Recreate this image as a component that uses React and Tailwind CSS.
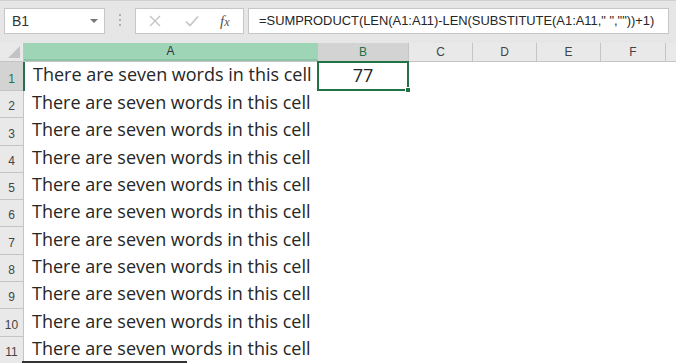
import React from 'react';

const rows = [1, 2, 3, 4, 5, 6, 7, 8, 9, 10, 11];
const cols = [
  { name: 'A', w: 'w-[294px]' },
  { name: 'B', w: 'w-[91px]' },
  { name: 'C', w: 'w-[64px]' },
  { name: 'D', w: 'w-[64px]' },
  { name: 'E', w: 'w-[64px]' },
  { name: 'F', w: 'w-[65px]' },
];

const App = () => {
  return (
    <div className="w-[676px] h-[363px] overflow-hidden bg-white relative font-['Open_Sans','DejaVu_Sans',sans-serif]">
      {/* Formula bar */}
      <div className="h-[43px] bg-[#e6e6e6] flex items-start pt-[7px] pl-[4px] border-t border-[#d0d0d0]">
        <div className="w-[101px] h-[26px] bg-white border border-[#c6c6c6] flex items-center justify-between pl-[7px] pr-[6px]">
          <span className="text-[14px] text-[#333] font-['Liberation_Sans',sans-serif]">B1</span>
          <span className="w-0 h-0 border-l-[4px] border-r-[4px] border-t-[4px] border-l-transparent border-r-transparent border-t-[#777]" />
        </div>
        <div className="ml-[14px] mt-[6px] flex flex-col gap-[3px]">
          <span className="w-[2px] h-[2px] bg-[#b0b0b0]" />
          <span className="w-[2px] h-[2px] bg-[#b0b0b0]" />
          <span className="w-[2px] h-[2px] bg-[#b0b0b0]" />
        </div>
        <div className="ml-[14px] w-[109px] h-[26px] bg-white border border-[#c6c6c6] flex items-center">
          <svg width="14" height="14" viewBox="0 0 14 14" className="ml-[12px]">
            <path d="M2 2 L12 12 M12 2 L2 12" stroke="#c4c4c4" strokeWidth="1.4" />
          </svg>
          <svg width="16" height="14" viewBox="0 0 16 14" className="ml-[22px]">
            <path d="M2 7.5 L6 11.5 L14 2.5" stroke="#c4c4c4" strokeWidth="1.6" fill="none" />
          </svg>
          <span className="ml-[20px] text-[15px] italic text-[#555] font-['Liberation_Serif',serif] leading-none">
            f<span className="text-[12px]">x</span>
          </span>
        </div>
        <div className="ml-[4px] w-[421px] h-[26px] bg-white border border-[#c6c6c6] flex items-center pl-[10px]">
          <span className="text-[12.9px] text-[#262626] font-['Liberation_Sans',sans-serif] whitespace-nowrap">
            =SUMPRODUCT(LEN(A1:A11)-LEN(SUBSTITUTE(A1:A11," ",""))+1)
          </span>
        </div>
      </div>

      {/* Column headers */}
      <div className="h-[19px] flex bg-[#e9e9e9] border-b border-[#c4c4c4]">
        <div className="w-[24px] border-r border-[#c4c4c4] flex items-end justify-end pr-[3px] pb-[3px]">
          <svg width="12" height="12" viewBox="0 0 12 12">
            <path d="M12 0 L12 12 L0 12 Z" fill="#c3c3c3" />
          </svg>
        </div>
        {cols.map((c) => (
          <div
            key={c.name}
            className={`${c.w} shrink-0 flex items-center justify-center border-r text-[12px] font-['Liberation_Sans',sans-serif] ${
              c.name === 'A'
                ? 'bg-[#9fd5b7] border-[#9fd5b7] text-[#333] border-b-2 border-b-[#8cc5a5]'
                : c.name === 'B'
                ? 'bg-[#d3d3d3] border-[#c4c4c4] text-[#217346]'
                : 'border-[#c4c4c4] text-[#444]'
            }`}
          >
            {c.name}
          </div>
        ))}
      </div>

      {/* Rows */}
      <div className="flex flex-col">
        {rows.map((r) => (
          <div key={r} className={`flex ${r === 1 ? 'h-[29px]' : 'h-[27.3px]'}`}>
            <div
              className={`w-[24px] shrink-0 border-r border-b border-[#c4c4c4] flex items-end justify-center pb-[2px] text-[12px] font-['Liberation_Sans',sans-serif] ${
                r === 1 ? 'bg-[#d3d3d3] text-[#217346]' : 'bg-[#e9e9e9] text-[#444]'
              }`}
            >
              {r}
            </div>
            <div className={`w-[294px] shrink-0 flex items-center pl-[8px] pb-[5px] ${r === 1 ? 'border-l-2 border-[#217346] -ml-[1px]' : ''}`}>
              <span className="text-[18px] text-[#262626] whitespace-nowrap leading-none">
                There are seven words in this cell
              </span>
            </div>
            {r === 1 && (
              <div className="w-[92px] h-[30px] -mt-[1px] shrink-0 border-2 border-[#217346] flex items-center justify-center pb-[3px] relative">
                <span className="text-[18px] text-[#262626] leading-none">77</span>
                <span className="absolute -right-[4px] -bottom-[4px] w-[6px] h-[6px] bg-[#217346] border border-white" />
              </div>
            )}
          </div>
        ))}
      </div>

      <div className="absolute left-[22px] bottom-0 w-[165px] h-[2px] bg-[#333]" />
    </div>
  );
};

export default App;
